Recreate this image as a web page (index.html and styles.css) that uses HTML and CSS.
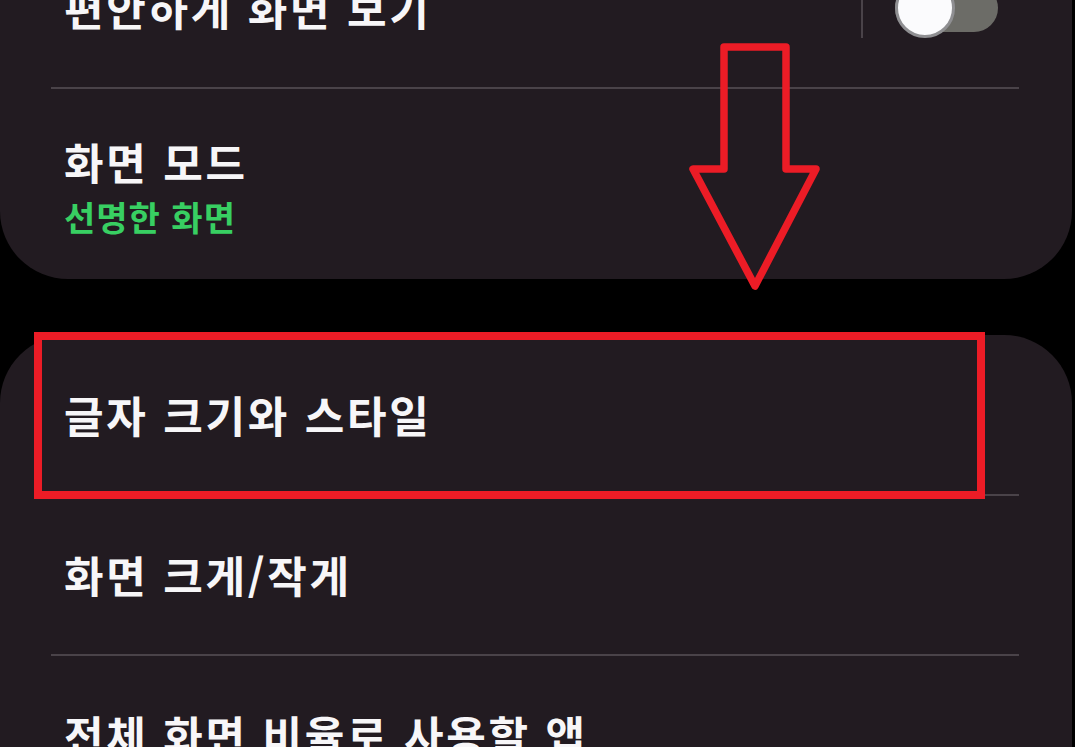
FILE: index.html
```html
<!DOCTYPE html>
<html lang="ko">
<head>
<meta charset="utf-8">
<title>디스플레이</title>
<link rel="stylesheet" href="styles.css">
</head>
<body>
<div class="screen">
  <section class="card card-top">
    <div class="row row-switch">
      <span class="title">편안하게 화면 보기</span>
      <div class="switch-area">
        <span class="vsep"></span>
        <span class="toggle"><span class="thumb"></span></span>
      </div>
    </div>
    <div class="divider"></div>
    <div class="row row-two">
      <span class="title">화면 모드</span>
      <span class="sub">선명한 화면</span>
    </div>
  </section>

  <section class="card card-bottom">
    <div class="row row-single"><span class="title">글자 크기와 스타일</span></div>
    <div class="divider"></div>
    <div class="row row-single"><span class="title">화면 크게/작게</span></div>
    <div class="divider"></div>
    <div class="row row-single"><span class="title">전체 화면 비율로 사용할 앱</span></div>
  </section>

  <div class="highlight-box"></div>
  <svg class="arrow" viewBox="680 30 160 280" width="160" height="280" aria-hidden="true">
    <path d="M724 47 L786 47 L786 169 L816 169 L755 286 L693 169 L724 169 Z" fill="none" stroke="#ec1c26" stroke-width="7.5" stroke-linejoin="round"/>
  </svg>
</div>
</body>
</html>
```

FILE: styles.css
```css
html, body {
  margin: 0;
  padding: 0;
  background: #000;
}

body {
  width: 1075px;
  height: 747px;
  overflow: hidden;
  font-family: "Noto Sans CJK KR", "Noto Sans", sans-serif;
  color: #f7f6f8;
}

.screen {
  position: relative;
  width: 1075px;
  height: 747px;
  overflow: hidden;
}

.card {
  background: #221b21;
  width: 1072px;
}

.card-top {
  margin-top: -71px;
  border-radius: 0 0 68px 68px;
}

.card-bottom {
  margin-top: 56px;
  border-radius: 68px 68px 0 0;
  height: 500px;
}

.row {
  display: flex;
  padding-left: 64px;
  box-sizing: border-box;
}

.title {
  font-size: 43px;
  font-weight: 700;
  letter-spacing: 2.7px;
  line-height: 1.2;
  white-space: nowrap;
}

.row-switch {
  height: 158px;
  align-items: center;
  justify-content: space-between;
  padding-right: 74px;
}

.switch-area {
  display: flex;
  align-items: center;
  gap: 32px;
}

.vsep {
  width: 2px;
  height: 60px;
  background: #4a4349;
}

.toggle {
  position: relative;
  display: block;
  width: 103px;
  height: 48px;
  border-radius: 24px;
  background: #6c6c67;
}

.thumb {
  position: absolute;
  left: 0;
  top: -6px;
  width: 60px;
  height: 60px;
  box-sizing: border-box;
  border-radius: 50%;
  background: #fbfbfd;
  border: 3px solid #8f8f92;
}

.divider {
  height: 2px;
  margin: 0 53px 0 51px;
  background: #4a4349;
}

.row-two {
  flex-direction: column;
  height: 190px;
  padding-top: 47px;
}

.sub {
  margin-top: 9px;
  font-size: 34px;
  font-weight: 700;
  letter-spacing: 1px;
  line-height: 1.2;
  color: #38cf62;
}

.row-single {
  height: 158px;
  align-items: center;
}

.card-bottom .row-single:first-child {
  height: 159px;
}

.highlight-box {
  position: absolute;
  left: 34px;
  top: 332px;
  width: 951px;
  height: 167px;
  box-sizing: border-box;
  border: 8px solid #ec1c26;
}

.arrow {
  position: absolute;
  left: 680px;
  top: 30px;
}
```
